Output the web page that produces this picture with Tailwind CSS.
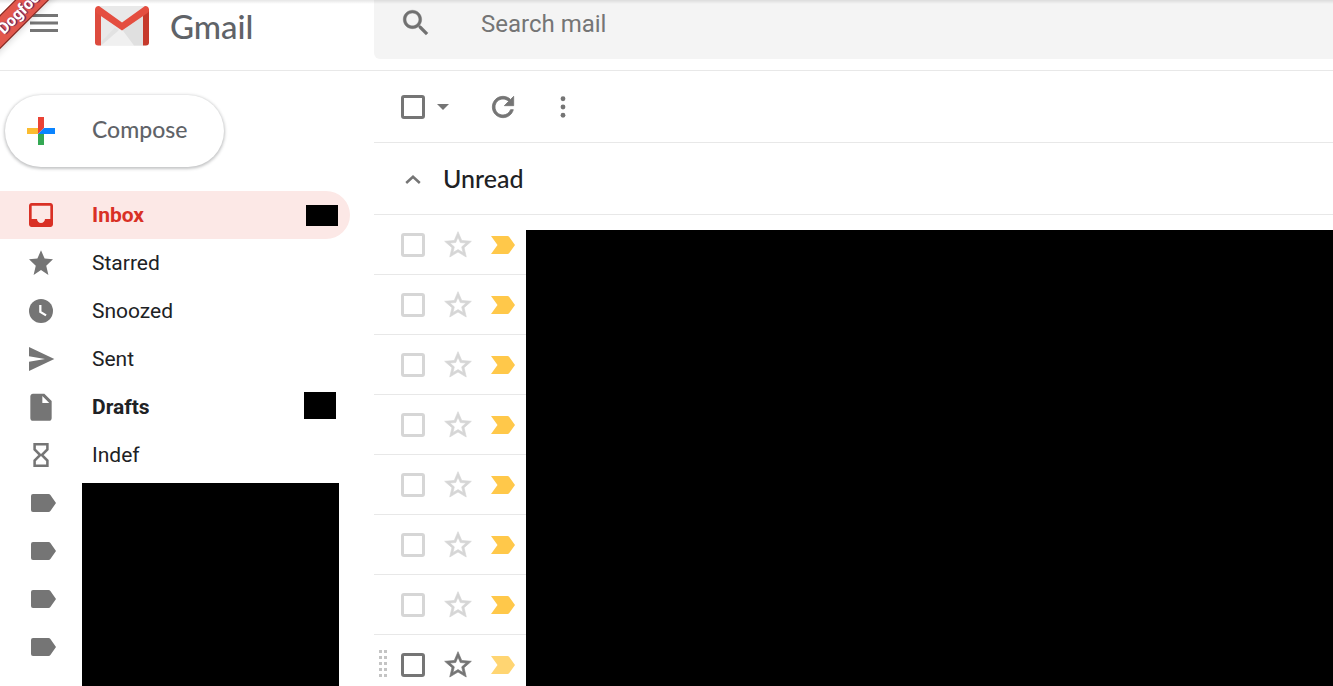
<!DOCTYPE html>
<html lang="en">

<head>
    <meta charset="utf-8">
    <title>Gmail</title>
    <meta name="viewport" content="width=device-width, initial-scale=1.0">
    <script src="https://cdn.jsdelivr.net/npm/@tailwindcss/browser@4"></script>
</head>
<body class="relative flex h-screen flex-col overflow-hidden bg-white font-['Roboto',sans-serif] text-[#202124]">
    <!-- shared icons -->
    <svg class="hidden">
        <symbol id="star-outline" viewBox="0 0 24 24"><path stroke-width=".5" d="M22 9.24l-7.19-.62L12 2 9.19 8.63 2 9.24l5.46 4.73L5.82 21 12 17.27 18.18 21l-1.63-7.03L22 9.24zM12 15.4l-3.76 2.27 1-4.28-3.32-2.88 4.38-.38L12 6.1l1.71 4.04 4.38.38-3.32 2.88 1 4.28L12 15.4z"/></symbol>
        <symbol id="important" viewBox="0 0 24 18"><path d="M0 0h16.5q1 0 1.6.8L24 9l-5.900 8.200q-.6.8-1.600.8H0l6.500-9z"/></symbol>
        <symbol id="label" viewBox="0 0 25 18"><path d="M2 0h15.500q1.200 0 1.900 1L25 9l-5.600 8q-.7 1-1.900 1H2q-2 0-2-2V2q0-2 2-2z"/></symbol>
    </svg>

    <div class="absolute inset-x-0 top-0 z-10 h-1 bg-linear-to-b from-black/10 to-transparent"></div>
    <div class="absolute -left-11 top-1 z-20 h-6 w-[120px] -rotate-45 border-y border-[#7c2a24] bg-[#e2574c] pl-[38px] text-base leading-[22px] font-bold text-white shadow-md text-shadow-[1px_1px_1px_#4a2060]">Dogfood</div>

    <header class="flex h-[71px] shrink-0 border-b border-[#e8e8e8]">
        <div class="flex w-[374px] shrink-0 items-start">
            <button class="ml-[30px] mt-3.5 h-[18px]" aria-label="Main menu">
                <svg class="h-[18px] w-7" viewBox="0 0 28 18" fill="#757575"><path d="M0 0h28v3H0zM0 7.500h28v3H0zM0 15h28v3H0z"/></svg>
            </button>
            <a href="#" class="ml-[37px] mt-1.5 flex items-center">
                <svg class="h-10 w-[54px]" viewBox="0 0 54 40">
                    <path d="M3 0h48v39.500H3z" fill="#e9e9e9"/>
                    <path d="M6 39.500L27 21l21 18.500z" fill="#f0f0f0"/>
                    <path d="M6 39.500V36l14-14.500 3.500 3z" fill="#e2e2e2"/>
                    <path d="M27 23.500l12 16h9V8z" fill="#e0e0e0"/>
                    <path d="M6 6L0 3v33.500Q0 39.500 3 39.500h3z" fill="#dd4b3e"/>
                    <path d="M48 6l6-3v33.500q0 3-3 3h-3z" fill="#c63a2c"/>
                    <path d="M0 4Q0 0 4 0L27 16.500 50 0q4 0 4 4 0 2-1.500 3L27 24.500 1.500 7Q0 6 0 4z" fill="#e44e40"/>
                </svg>
                <span class="ml-[21px] font-['Lato',sans-serif] text-[33px] leading-10 font-medium text-[#5f6368]">Gmail</span>
            </a>
        </div>
        <form class="flex h-[59px] flex-1 items-start rounded-bl-md bg-[#f4f4f4]">
            <button type="button" class="ml-[25px] mt-1.5" aria-label="Search">
                <svg class="size-[34px]" viewBox="0 0 24 24" fill="#717171" stroke="#717171" stroke-width=".3"><path d="M15.500 14h-.79l-.28-.27C15.410 12.590 16 11.110 16 9.500 16 5.910 13.090 3 9.500 3S3 5.910 3 9.500 5.910 16 9.500 16c1.610 0 3.090-.59 4.230-1.570l.27.28v.79l5 4.990L20.490 19l-4.990-5zm-6 0C7.010 14 5 11.990 5 9.500S7.010 5 9.500 5 14 7.010 14 9.500 11.990 14 9.500 14z"/></svg>
            </button>
            <input type="text" aria-label="Search mail" placeholder="Search mail" class="ml-12 mt-1 h-10 min-w-0 flex-1 bg-transparent text-2xl outline-none placeholder:text-[#757575]">
        </form>
    </header>

    <div class="flex min-h-0 flex-1">
        <aside class="relative w-[374px] shrink-0 overflow-hidden pt-6">
            <button class="ml-[5px] flex h-[72px] w-[219px] items-center rounded-full bg-white pl-[22px] shadow-[0_1px_3px_1px_rgba(60,64,67,0.3)]">
                <svg class="size-7" viewBox="0 0 28 28">
                    <path d="M11 0h6v11l-6 6z" fill="#ea4335"/>
                    <path d="M0 11h11v6H0z" fill="#fbbc30"/>
                    <path d="M11 17h6v11h-6z" fill="#34a853"/>
                    <path d="M17 11h11v6H11z" fill="#0a84ff"/>
                </svg>
                <span class="mb-1 ml-[37px] font-['Lato',sans-serif] text-[23px] font-medium text-[#5f6368]">Compose</span>
            </button>

            <nav class="mt-6 text-[21px]">
                <a href="#" class="mr-6 flex h-12 items-center rounded-r-full bg-[#fce8e6] pl-[25px] font-bold text-[#d93025]">
                    <svg class="size-8 fill-current" viewBox="0 0 24 24"><path d="M19 3H5c-1.100 0-2 .9-2 2v14c0 1.100.9 2 2 2h14c1.100 0 2-.9 2-2V5c0-1.100-.9-2-2-2zm0 12h-4c0 1.660-1.350 3-3 3s-3-1.340-3-3H5V5h14v10z"/></svg>
                    <span class="ml-[35px] mt-0.5">Inbox</span>
                    <span class="ml-auto mr-3 h-[21px] w-8 bg-black"></span>
                </a>
                <a href="#" class="flex h-12 items-center pl-[25px]">
                    <svg class="size-8" viewBox="0 0 24 24" fill="#757575"><path d="M12 17.270L17.560 21l-1.640-7.030L21 9.240l-6.300-.61L12 2.500 9.300 8.630 3 9.240l5.080 4.730L6.440 21z"/></svg>
                    <span class="ml-[35px] mt-0.5">Starred</span>
                </a>
                <a href="#" class="flex h-12 items-center pl-[25px]">
                    <svg class="size-8" viewBox="0 0 24 24"><circle cx="12" cy="12" r="9" fill="#757575"/><path d="M11.500 7.500v5.200l4.300 2.600" fill="none" stroke="#fff" stroke-width="1.700"/></svg>
                    <span class="ml-[35px] mt-0.5">Snoozed</span>
                </a>
                <a href="#" class="flex h-12 items-center pl-[25px]">
                    <svg class="size-8" viewBox="0 0 24 24" fill="#757575"><path d="M3 21l19-9L3 3v7l12 2-12 2z"/></svg>
                    <span class="ml-[35px] mt-0.5">Sent</span>
                </a>
                <a href="#" class="flex h-12 items-center pl-[25px] font-bold">
                    <svg class="size-8" viewBox="0 0 24 24" fill="#757575"><path fill-rule="evenodd" d="M14.500 2H6c-1.100 0-2 .9-2 2v16.400c0 1.100.9 2 2 2h12c1.100 0 2-.9 2-2V7.500zM13 3.800L18.200 9H13z"/></svg>
                    <span class="ml-[35px] mt-0.5">Drafts</span>
                    <span class="mb-1 ml-auto mr-[38px] h-[27px] w-8 bg-black"></span>
                </a>
                <a href="#" class="flex h-12 items-center pl-[25px]">
                    <svg class="size-8" viewBox="0 0 24 24" fill="none" stroke="#757575" stroke-width="1.900"><path d="M7.200 3.900h9.600v3.900L12.600 12l4.200 4.200v3.900H7.200v-3.900l4.200-4.200-4.200-4.200z"/></svg>
                    <span class="ml-[35px] mt-0.5">Indef</span>
                </a>
                <a href="#" aria-label="Label 1" class="flex h-12 items-center pl-[31px]"><svg class="h-[18px] w-[25px]" fill="#757575"><use href="#label"/></svg></a>
                <a href="#" aria-label="Label 2" class="flex h-12 items-center pl-[31px]"><svg class="h-[18px] w-[25px]" fill="#757575"><use href="#label"/></svg></a>
                <a href="#" aria-label="Label 3" class="flex h-12 items-center pl-[31px]"><svg class="h-[18px] w-[25px]" fill="#757575"><use href="#label"/></svg></a>
                <a href="#" aria-label="Label 4" class="flex h-12 items-center pl-[31px]"><svg class="h-[18px] w-[25px]" fill="#757575"><use href="#label"/></svg></a>
            </nav>
            <!-- hidden label names -->
            <div class="absolute bottom-0 left-[82px] top-[412px] w-[257px] bg-black"></div>
        </aside>

        <main class="relative flex-1 overflow-hidden">
            <div class="flex h-[72px] items-center border-b border-[#e8e8e8] pl-[27px]">
                <input type="checkbox" aria-label="Select all" class="size-6 appearance-none rounded-[3px] border-3 border-[#757575]">
                <button class="ml-3" aria-label="Select options"><svg class="h-1.5 w-3" viewBox="0 0 12 6" fill="#757575"><path d="M0 0h12L6 6z"/></svg></button>
                <button class="ml-[38px]" aria-label="Refresh">
                    <svg class="size-8" viewBox="0 0 24 24" fill="#757575" stroke="#757575" stroke-width=".6"><path d="M17.650 6.350C16.200 4.900 14.210 4 12 4c-4.420 0-7.990 3.580-7.990 8s3.570 8 7.990 8c3.730 0 6.840-2.550 7.730-6h-2.080c-.82 2.330-3.040 4-5.650 4-3.310 0-6-2.690-6-6s2.690-6 6-6c1.660 0 3.140.69 4.220 1.780L13 11h7V4l-2.350 2.350z"/></svg>
                </button>
                <button class="ml-7" aria-label="More">
                    <svg class="size-8" viewBox="0 0 24 24" fill="#757575"><circle cx="12" cy="5.800" r="1.800"/><circle cx="12" cy="12" r="1.800"/><circle cx="12" cy="18.200" r="1.800"/></svg>
                </button>
            </div>
            <div class="flex h-[72px] items-center border-b border-[#e8e8e8] pl-[31px]">
                <button class="mt-0.5" aria-label="Collapse"><svg class="h-[9px] w-4" viewBox="0 0 16 9" fill="none" stroke="#757575" stroke-width="2.500"><path d="M1.200 8L8 1.800 14.800 8"/></svg></button>
                <h2 class="ml-[22px] font-['Lato',sans-serif] text-[25px] font-medium">Unread</h2>
            </div>
            <ul id="mail-list"></ul>
            <!-- hidden message text -->
            <div class="absolute bottom-0 left-[152px] right-0 top-[159px] bg-black"></div>
        </main>
    </div>

    <script>
        const list = document.getElementById("mail-list");

        // The last row is the hovered one: darker icons and a drag handle
        for (let i = 0; i < 8; i++) {
            const hovered = i === 7;
            const row = document.createElement("li");
            row.className = "flex h-[60px] items-center border-b border-[#e8e8e8]";
            row.innerHTML = `
                <span class="ml-[5px] w-[22px]">${hovered ? '<svg class="h-[30px] w-2" viewBox="0 0 8 30"><path d="M1.500 0v30M6.500 0v30" fill="none" stroke="#c4c4c4" stroke-width="3" stroke-dasharray="3 3"/></svg>' : ''}</span>
                <input type="checkbox" aria-label="Select message ${i + 1}" class="size-6 appearance-none rounded-[3px] border-3 ${hovered ? 'border-[#757575]' : 'border-[#d6d6d6]'}">
                <button class="ml-[17px]" aria-label="Star"><svg class="size-8 ${hovered ? 'fill-[#757575] stroke-[#757575]' : 'fill-[#d6d6d6] stroke-[#d6d6d6]'}"><use href="#star-outline"/></svg></button>
                <button class="ml-[17px]" aria-label="Important"><svg class="h-[18px] w-6 ${hovered ? 'fill-[#ffd572]' : 'fill-[#ffc84a]'}"><use href="#important"/></svg></button>`;
            list.appendChild(row);
        }
    </script>
</body>
</html>
